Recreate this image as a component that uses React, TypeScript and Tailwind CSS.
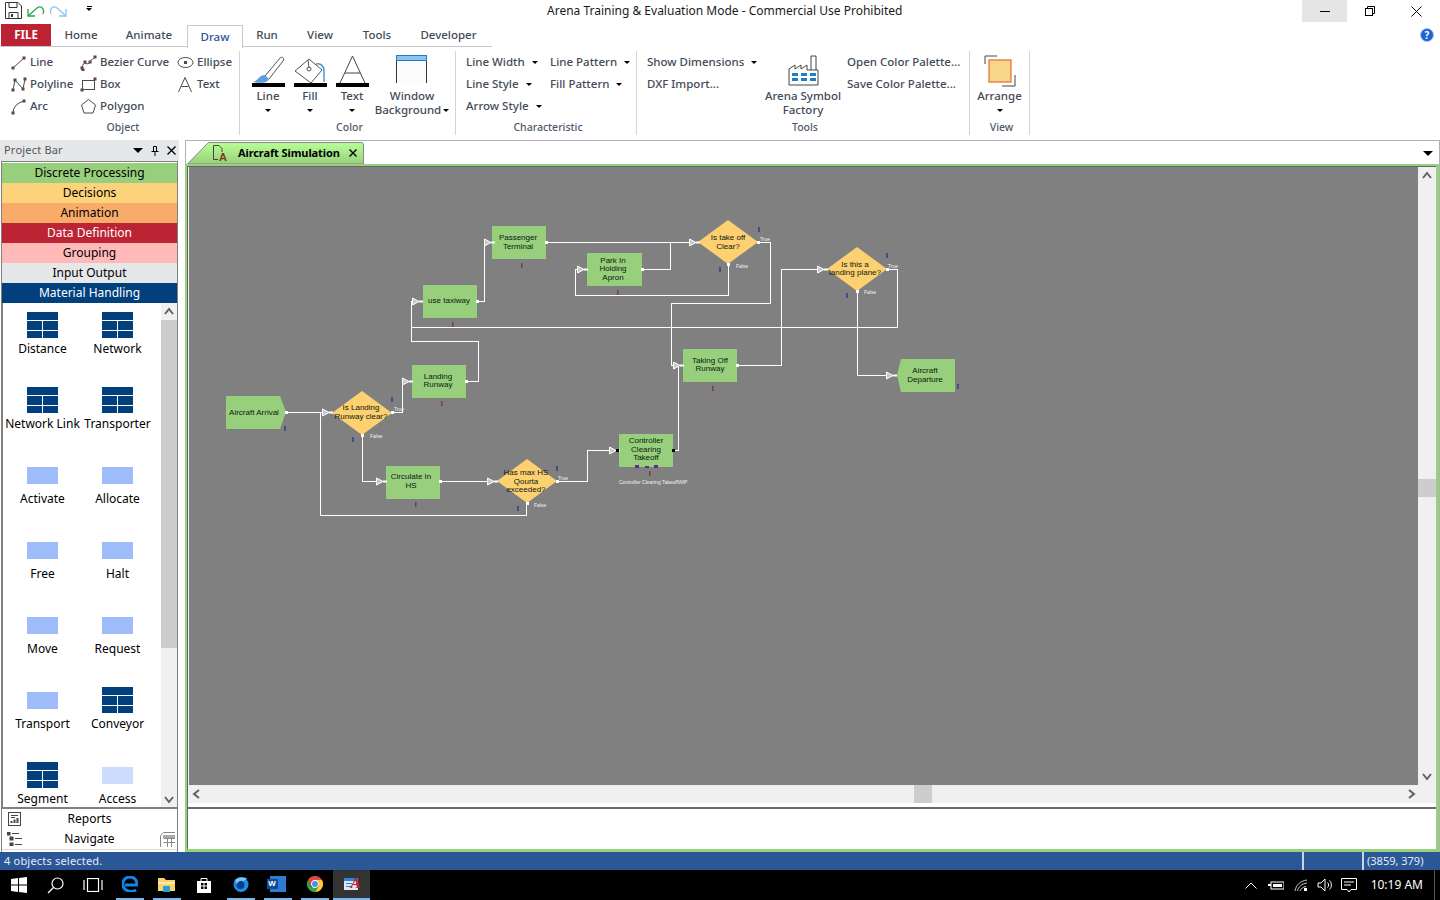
import React from 'react';

const UI_FONT = "font-['Noto_Sans',sans-serif]";

const Caret = ({ className = '' }: { className?: string }) => (
  <span className={`inline-block w-0 h-0 border-x-[3px] border-t-[3px] border-x-transparent border-t-black ${className}`} />
);

// small ribbon icons, red dots are the drawing handles
const Dot = ({ x, y }: { x: number; y: number }) => <rect x={x - 1} y={y - 1} width={2} height={2} fill="#e0242c" />;

const SmallIcon = ({ name }: { name: string }) => (
  <svg width={17} height={17} viewBox="0 0 17 17" fill="none" stroke="#4a4a4a" strokeWidth={1} className="shrink-0">
    {name === 'line' && (<><path d="M3 14 L14 4" /><Dot x={3} y={14} /><Dot x={14} y={4} /></>)}
    {name === 'polyline' && (<><path d="M3 14 L5 4 L13 13 L15 3" /><Dot x={3} y={14} /><Dot x={5} y={4} /><Dot x={13} y={13} /><Dot x={15} y={3} /></>)}
    {name === 'arc' && (<><path d="M3 15 Q3 6 14 3" /><Dot x={3} y={15} /><Dot x={14} y={3} /></>)}
    {name === 'bezier' && (<><path d="M2 14 C3 5 8 13 10 8 C11 5 13 6 15 3" /><Dot x={2} y={14} /><Dot x={5} y={8} /><Dot x={10} y={8} /><Dot x={15} y={3} /><Dot x={3} y={16} /></>)}
    {name === 'box' && (<><rect x={2.5} y={4.5} width={12} height={9} /><Dot x={15} y={3} /><Dot x={2} y={14} /></>)}
    {name === 'polygon' && <path d="M8.5 1.5 L15.5 7 L13 15 L4 15 L1.5 7 Z" />}
    {name === 'ellipse' && (<><ellipse cx={8.5} cy={8.5} rx={7.5} ry={5} /><Dot x={8.5} y={8.5} /></>)}
    {name === 'text' && (<><path d="M1.5 16 L8 1.5 L14.5 16" /><path d="M4.5 10.5 H11.5" /></>)}
  </svg>
);

const SmallBtn = ({ icon, label, className = '' }: { icon: string; label: string; className?: string }) => (
  <div className={`flex items-center gap-[3px] h-[22px] whitespace-nowrap ${className}`}>
    <SmallIcon name={icon} />
    <span>{label}</span>
  </div>
);

const MenuBtn = ({ label, gap = 'ml-[7px]', caret = true }: { label: string; gap?: string; caret?: boolean }) => (
  <div className="flex items-center h-[22px] whitespace-nowrap">
    <span>{label}</span>
    {caret && <Caret className={gap} />}
  </div>
);

const BigBtn = ({ width, icon, lines, caret, inlineCaret }: { width: string; icon: React.ReactNode; lines: string[]; caret?: boolean; inlineCaret?: boolean }) => (
  <div className={`flex flex-col items-center ${width}`}>
    <div className="h-[38px] pt-[4px]">{icon}</div>
    {lines.map((l, i) => (
      <div key={l} className="h-[14px] leading-[14px] whitespace-nowrap flex items-center">
        {l}
        {inlineCaret && i === lines.length - 1 && <Caret className="ml-[2px]" />}
      </div>
    ))}
    {caret && <div className="h-[14px] flex items-center"><Caret /></div>}
  </div>
);

const Group = ({ width, label, labelPad = 'pl-[4px]', children }: { width: string; label: string; labelPad?: string; children: React.ReactNode }) => (
  <div className={`flex flex-col h-[84px] mt-[4px] border-r border-[#d4d4d4] ${width}`}>
    <div className="h-[68px] flex">{children}</div>
    <div className={`h-[16px] leading-[16px] text-center text-[10.5px] text-[#4d5a6a] ${labelPad}`}>{label}</div>
  </div>
);

const BrushIcon = () => (
  <svg width={33} height={33} viewBox="0 0 33 33" fill="none">
    <path d="M13 21 L28 3 C30 1 33 3 31 6 L17 24" stroke="#555" />
    <path d="M1 27 C6 26 7 20 13 20 L17 24 C15 29 6 28 1 27 Z" fill="#5f9fdc" />
    <rect x={0} y={28} width={33} height={4} fill="#000" />
  </svg>
);

const FillIcon = () => (
  <svg width={33} height={33} viewBox="0 0 33 33" fill="none">
    <path d="M15 4 L28 15 L17 28 L1 16 Z" stroke="#555" />
    <path d="M14 5 L15 13" stroke="#555" />
    <circle cx={15} cy={14} r={2} stroke="#555" />
    <path d="M22 9 C28 8 30 12 30 16 V27" stroke="#4a9ad8" strokeWidth={1.5} />
    <rect x={0} y={28} width={33} height={4} fill="#000" />
  </svg>
);

const TextColorIcon = () => (
  <svg width={33} height={33} viewBox="0 0 33 33" fill="none" stroke="#444">
    <path d="M4 28 L16.5 1 L29 28" />
    <path d="M9 18 H24" />
    <rect x={0} y={28} width={33} height={4} fill="#000" stroke="none" />
  </svg>
);

const WindowIcon = () => (
  <svg width={32} height={29} viewBox="0 0 32 29" fill="none">
    <rect x={0.5} y={0.5} width={30} height={28} fill="#fbfbfb" stroke="none" />
    <path d="M0.5 28 V0.5 H30.5 V28" stroke="#333" />
    <rect x={0.5} y={0.5} width={30} height={5} fill="#8fc3ec" stroke="#1f7fc4" />
  </svg>
);

const FactoryIcon = () => (
  <svg width={32} height={31} viewBox="0 0 32 31">
    <g fill="none" stroke="#444">
      <path d="M2 30 V14 L8 10 V14 L14 10 V14 L20 10 V15" />
      <path d="M24 15 V1 H29 V15" />
      <path d="M2 30 H31 V15 H20" />
    </g>
    {[5, 14, 23].map(x => [18, 23].map(y => <rect key={`${x}-${y}`} x={x} y={y} width={6} height={3} fill="#1f7fc4" />))}
  </svg>
);

const ArrangeIcon = () => (
  <svg width={32} height={33} viewBox="0 0 32 33" fill="none">
    <path d="M1 9 V1 H13" stroke="#444" />
    <path d="M31 20 V31 H18" stroke="#444" />
    <rect x={5} y={5} width={22} height={22} fill="#f7d58a" stroke="#e0702a" strokeWidth={1.2} />
  </svg>
);

const Ribbon = () => (
  <div className="flex h-[93px] text-[11.5px] font-medium text-[#444a58] shrink-0">
    <Group width="w-[240px]" label="Object" labelPad="pl-[7px]">
      <div className="grid grid-cols-[70px_97px_60px] pl-[10px] auto-rows-[22px]">
        <SmallBtn icon="line" label="Line" />
        <SmallBtn icon="bezier" label="Bezier Curve" />
        <SmallBtn icon="ellipse" label="Ellipse" />
        <SmallBtn icon="polyline" label="Polyline" />
        <SmallBtn icon="box" label="Box" />
        <SmallBtn icon="text" label="Text" />
        <SmallBtn icon="arc" label="Arc" />
        <SmallBtn icon="polygon" label="Polygon" />
      </div>
    </Group>
    <Group width="w-[216px]" label="Color">
      <div className="flex pl-[7px]">
        <BigBtn width="w-[42px]" icon={<BrushIcon />} lines={['Line']} caret />
        <BigBtn width="w-[42px]" icon={<FillIcon />} lines={['Fill']} caret />
        <BigBtn width="w-[42px]" icon={<TextColorIcon />} lines={['Text']} caret />
        <BigBtn width="w-[78px]" icon={<WindowIcon />} lines={['Window', 'Background']} inlineCaret />
      </div>
    </Group>
    <Group width="w-[181px]" label="Characteristic">
      <div className="grid grid-cols-[84px_90px] pl-[10px] auto-rows-[22px]">
        <MenuBtn label="Line Width" />
        <MenuBtn label="Line Pattern" />
        <MenuBtn label="Line Style" />
        <MenuBtn label="Fill Pattern" />
        <MenuBtn label="Arrow Style" />
      </div>
    </Group>
    <Group width="w-[333px]" label="Tools">
      <div className="flex pl-[10px]">
        <div className="w-[116px]">
          <MenuBtn label="Show Dimensions" />
          <MenuBtn label="DXF Import..." caret={false} />
        </div>
        <BigBtn width="w-[80px]" icon={<FactoryIcon />} lines={['Arena Symbol', 'Factory']} />
        <div className="pl-[4px]">
          <MenuBtn label="Open Color Palette..." caret={false} />
          <MenuBtn label="Save Color Palette..." caret={false} />
        </div>
      </div>
    </Group>
    <Group width="w-[60px]" label="View">
      <BigBtn width="w-[60px]" icon={<ArrangeIcon />} lines={['Arrange']} caret />
    </Group>
  </div>
);

const TitleBar = () => (
  <div className="flex h-[24px] shrink-0">
    <div className="flex items-start w-[547px] pt-[2px] pl-[5px]">
      <svg width={17} height={17} viewBox="0 0 17 17" fill="none" stroke="#333">
        <path d="M0.5 0.5 H13 L16.5 4 V16.5 H0.5 Z" />
        <path d="M4 0.5 V5.5 H12 V0.5" />
        <path d="M4 16.5 V10.5 H13 V16.5" />
        <rect x={6} y={12} width={2} height={3} fill="#333" stroke="none" />
      </svg>
      <svg width={18} height={14} viewBox="0 0 18 14" fill="none" stroke="#27a74a" strokeWidth={1.3} className="ml-[5px] mt-[3px]">
        <path d="M1 4 V11 H8" />
        <path d="M1 11 L10 3 C14 0 18 4 16 9" />
      </svg>
      <svg width={18} height={14} viewBox="0 0 18 14" fill="none" stroke="#8cc6ec" strokeWidth={1.3} className="ml-[4px] mt-[3px]">
        <path d="M17 4 V11 H10" />
        <path d="M17 11 L8 3 C4 0 0 4 2 9" />
      </svg>
      <div className="ml-[19px] mt-[4px] flex flex-col items-center gap-[1px]">
        <span className="w-[5px] h-[1px] bg-black" />
        <Caret />
      </div>
    </div>
    <div className="text-[12px] leading-[22px] text-[#1a1a1a] whitespace-nowrap">Arena Training &amp; Evaluation Mode - Commercial Use Prohibited</div>
    <div className="flex-1 flex justify-end h-[22px]">
      <div className="w-[45px] bg-[#e5e5e5] flex items-center justify-center">
        <span className="w-[10px] h-px bg-black" />
      </div>
      <div className="w-[46px] flex items-center justify-center">
        <svg width={10} height={10} viewBox="0 0 10 10" fill="none" stroke="#000">
          <rect x={0.5} y={2.5} width={7} height={7} />
          <path d="M2.5 2.5 V0.5 H9.5 V7.5 H7.5" />
        </svg>
      </div>
      <div className="w-[47px] flex items-center justify-center">
        <svg width={11} height={11} viewBox="0 0 11 11" stroke="#000"><path d="M0.5 0.5 L10.5 10.5 M10.5 0.5 L0.5 10.5" /></svg>
      </div>
    </div>
  </div>
);

const TABS = [
  { label: 'Home', w: 'w-[60px]' },
  { label: 'Animate', w: 'w-[76px]' },
];
const TABS_AFTER = [
  { label: 'Run', w: 'w-[48px]' },
  { label: 'View', w: 'w-[58px]' },
  { label: 'Tools', w: 'w-[56px]' },
  { label: 'Developer', w: 'w-[87px]' },
];

const TabRow = () => (
  <div className="flex items-center h-[23px] shrink-0 pr-[9px]">
    <div className="flex h-[23px] w-[492px] border-b border-[#c8c8cc] text-[11.5px] font-medium text-[#444a58]">
      <div className="ml-px w-[50px] bg-[#bc2233] text-white font-bold text-[11.5px] flex items-center justify-center">FILE</div>
      {TABS.map(t => <div key={t.label} className={`${t.w} flex items-center justify-center`}>{t.label}</div>)}
      <div className="w-[56px] h-[23px] mt-px bg-white border border-b-0 border-[#c8c8cc] text-[#2f5597] flex items-center justify-center">Draw</div>
      {TABS_AFTER.map(t => <div key={t.label} className={`${t.w} flex items-center justify-center`}>{t.label}</div>)}
    </div>
    <div className="ml-auto -mt-[1px] mr-[-3px] w-[14px] h-[14px] rounded-full bg-[#1f62d6] border border-[#a9c4ee] text-white text-[10px] font-bold leading-[12px] text-center">?</div>
  </div>
);

const ACCORDION = [
  { label: 'Discrete Processing', cls: 'bg-[#98cf7c] text-black' },
  { label: 'Decisions', cls: 'bg-[#fcd27a] text-black' },
  { label: 'Animation', cls: 'bg-[#f9ab6a] text-black' },
  { label: 'Data Definition', cls: 'bg-[#bc2333] text-white' },
  { label: 'Grouping', cls: 'bg-[#ffb9b9] text-black' },
  { label: 'Input Output', cls: 'bg-[#e6e7e9] text-black' },
  { label: 'Material Handling', cls: 'bg-[#023f7d] text-white' },
];

const MODULES: { label: string; kind: 'table' | 'flat' | 'pale' }[] = [
  { label: 'Distance', kind: 'table' },
  { label: 'Network', kind: 'table' },
  { label: 'Network Link', kind: 'table' },
  { label: 'Transporter', kind: 'table' },
  { label: 'Activate', kind: 'flat' },
  { label: 'Allocate', kind: 'flat' },
  { label: 'Free', kind: 'flat' },
  { label: 'Halt', kind: 'flat' },
  { label: 'Move', kind: 'flat' },
  { label: 'Request', kind: 'flat' },
  { label: 'Transport', kind: 'flat' },
  { label: 'Conveyor', kind: 'table' },
  { label: 'Segment', kind: 'table' },
  { label: 'Access', kind: 'pale' },
];

const ModuleIcon = ({ kind }: { kind: 'table' | 'flat' | 'pale' }) => {
  if (kind === 'table') {
    return (
      <svg width={31} height={26} viewBox="0 0 31 26">
        <rect width={31} height={26} fill="#023f7d" />
        <path d="M0 8.5 H31 M0 18.5 H31 M15.5 8 V26" stroke="#fff" />
      </svg>
    );
  }
  return <div className={`w-[31px] h-[17px] ${kind === 'flat' ? 'bg-[#9dbcf9]' : 'bg-[#cbdcfc]'}`} />;
};

const Chevron = ({ dir }: { dir: 'up' | 'down' | 'left' | 'right' }) => {
  const d = { up: 'M1 7 L5 2 L9 7', down: 'M1 3 L5 8 L9 3', left: 'M7 1 L2 5 L7 9', right: 'M3 1 L8 5 L3 9' }[dir];
  return (
    <svg width={10} height={10} viewBox="0 0 10 10" fill="none" stroke="#606060" strokeWidth={2}><path d={d} /></svg>
  );
};

const Sidebar = () => (
  <div className="w-[179px] shrink-0 flex flex-col text-[12px] text-black">
    <div className="h-[21px] bg-[#e6e7e9] flex items-center pl-[4px] pr-[3px] text-[11px] text-[#555]">
      <span className="flex-1 tracking-[0.2px]">Project Bar</span>
      <span className="w-0 h-0 border-x-[5px] border-t-[5px] border-x-transparent border-t-black mr-[8px]" />
      <svg width={8} height={10} viewBox="0 0 8 10" fill="none" stroke="#000" className="mr-[8px]">
        <path d="M2.5 0.5 H5.5 V5.5 H2.5 Z M0.5 5.5 H7.5 M4 5.5 V10" />
      </svg>
      <svg width={9} height={9} viewBox="0 0 9 9" stroke="#000" strokeWidth={1.3}><path d="M0.5 0.5 L8.5 8.5 M8.5 0.5 L0.5 8.5" /></svg>
    </div>
    <div className="flex-1 ml-px mr-[1px] border-x border-t border-[#808080] flex flex-col mt-0 pt-px min-h-0">
      {ACCORDION.map(a => (
        <div key={a.label} className={`h-[20px] leading-[20px] text-center shrink-0 ${a.cls}`}>{a.label}</div>
      ))}
      <div className="h-[506px] shrink-0 flex border-b-2 border-l border-[#808080] bg-white overflow-hidden">
        <div className="w-[158px] shrink-0 h-full overflow-hidden">
          <div className="grid grid-cols-[75px_75px] pl-[2px] auto-rows-[75px]">
            {MODULES.map(m => (
              <div key={m.label} className="flex flex-col items-center whitespace-nowrap">
                <div className="h-[38px] mt-0 pt-[6px] flex items-center justify-center"><div className="h-[26px] flex items-center"><ModuleIcon kind={m.kind} /></div></div>
                <div className="h-[16px] leading-[16px] mt-0">{m.label}</div>
              </div>
            ))}
          </div>
        </div>
        <div className="w-[17px] h-full bg-[#f0f0f0] flex flex-col">
          <div className="h-[17px] flex items-center justify-center"><Chevron dir="up" /></div>
          <div className="h-[328px] bg-[#cdcdcd]" />
          <div className="flex-1" />
          <div className="h-[17px] flex items-center justify-center"><Chevron dir="down" /></div>
        </div>
      </div>
      <div className="h-[20px] leading-[20px] relative text-center bg-white">
        Reports
        <svg width={13} height={14} viewBox="0 0 13 14" fill="none" stroke="#444" className="absolute left-[6px] top-[3px]">
          <rect x={0.5} y={0.5} width={12} height={13} />
          <path d="M3 3.5 H10 M3 5.5 H7" />
          <path d="M3.5 11 V9 M6.5 11 V7.5 M9.5 11 V6" strokeWidth={2} />
        </svg>
      </div>
      <div className="h-[20px] leading-[20px] relative text-center bg-white">
        Navigate
        <svg width={15} height={14} viewBox="0 0 15 14" stroke="#444" className="absolute left-[5px] top-[3px]">
          <path d="M5 1.5 H12 M8 6.5 H15 M8 12.5 H15" />
          <rect x={0} y={0} width={3} height={3} fill="#444" />
          <rect x={3} y={5} width={3} height={3} fill="#444" />
          <rect x={3} y={11} width={3} height={3} fill="#444" />
        </svg>
        <svg width={15} height={15} viewBox="0 0 15 15" fill="none" stroke="#888" className="absolute right-[2px] top-[3px]">
          <path d="M0.5 15 V3.5 L3.5 0.5 H15" />
          <path d="M3.5 6.5 H15 M3.5 10.5 H15 M7.5 4 V15 M11.5 4 V15" />
          <rect x={3} y={3} width={12} height={3} fill="#aaa" stroke="none" />
        </svg>
      </div>
      <div className="flex-1 border-t border-[#d8d8d8]" />
    </div>
  </div>
);

type Node = { x: number; y: number; cx: number; lines: [string, number][] };

const RECTS: Node[] = [
  { x: 492, y: 225, cx: 518, lines: [['Passenger', 239], ['Terminal', 248]] },
  { x: 423, y: 284, cx: 449, lines: [['use taxiway', 302]] },
  { x: 412, y: 364, cx: 438, lines: [['Landing', 378], ['Runway', 386]] },
  { x: 386, y: 465, cx: 411, lines: [['Circulate In', 478], ['HS', 487]] },
  { x: 619, y: 433, cx: 646, lines: [['Controller', 442], ['Clearing', 451], ['Takeoff', 459]] },
  { x: 683, y: 348, cx: 710, lines: [['Taking Off', 362], ['Runway', 370]] },
];

const DIAMONDS: { cx: number; cy: number; tx: number; lines: [string, number][] }[] = [
  { cx: 362, cy: 412, tx: 361, lines: [['Is Landing', 409], ['Runway clear?', 418]] },
  { cx: 527, cy: 480, tx: 526, lines: [['Has max HS', 474], ['Qourta', 483], ['exceeded?', 491]] },
  { cx: 728, cy: 241, tx: 728, lines: [['Is take off', 239], ['Clear?', 248]] },
  { cx: 857, cy: 268, tx: 855, lines: [['Is this a', 266], ['landing plane?', 274]] },
];

const WIRES = [
  '286,411 322,411',
  '320,411 320,514 526,514 526,503',
  '362,434 362,480 376,480',
  '392,411 402,411 402,380 402,380',
  '402,411 402,380 403,380',
  '466,380 478,380 478,340 411,340 411,300 412,300',
  '477,300 484,300 484,241 485,241',
  '411,326 897,326 897,268 887,268',
  '440,480 487,480',
  '546,241 689,241',
  '642,268 670,268 670,241',
  '728,263 728,294 575,294 575,268 577,268',
  '758,241 770,241 770,302 671,302 671,364 673,364',
  '557,480 587,480 587,449 609,449',
  '673,449 678,449 678,364',
  '737,364 781,364 781,268 817,268',
  '857,290 857,374 886,374',
];

// entry point: x is the left end of the little flag
const ENTRIES: [number, number][] = [
  [322, 411], [402, 380], [376, 480], [412, 300], [484, 241], [487, 480], [689, 241],
  [577, 268], [673, 364], [609, 449], [817, 268], [886, 374],
];

const EXITS: [number, number][] = [[286, 411], [466, 380], [477, 300], [546, 241], [642, 268], [440, 480], [737, 364], [392, 411], [362, 434], [557, 480], [527, 502], [758, 241], [728, 263], [887, 268], [857, 290]];

const BLUE_MARKS: [number, number][] = [[284, 425], [391, 396], [352, 436], [517, 505], [556, 465], [719, 266], [758, 226], [846, 292], [886, 252], [957, 383]];
const RED_MARKS: [number, number][] = [[441, 400], [415, 501], [521, 262], [617, 289], [712, 385], [649, 470], [452, 321]];

const SMALL_LABELS: [string, number, number][] = [
  ['True', 394, 410], ['False', 370, 437], ['True', 558, 479], ['False', 534, 506],
  ['True', 760, 240], ['False', 736, 267], ['True', 888, 267], ['False', 864, 293],
];

const Diagram = () => (
  <svg width={1229} height={618} viewBox="189 166 1229 618" className="block">
    <g fontFamily="'Liberation Sans', sans-serif" fontSize={8} fill="#0b1a10" textAnchor="middle">
      <polygon points="226,395 280,395 286,411 280,428 226,428" fill="#98cf7c" />
      <text x={254} y={414}>Aircraft Arrival</text>
      <polygon points="897,374 901,358 955,358 955,391 901,391" fill="#98cf7c" />
      <text x={925} y={372}>Aircraft</text>
      <text x={925} y={381}>Departure</text>
      {RECTS.map(r => (
        <g key={r.x}>
          <rect x={r.x} y={r.y} width={54} height={33} fill="#98cf7c" />
          {r.lines.map(([t, y]) => <text key={t} x={r.cx} y={y}>{t}</text>)}
        </g>
      ))}
      <rect x={587} y={252} width={55} height={33} fill="#98cf7c" />
      <text x={613} y={262}>Park In</text>
      <text x={613} y={270}>Holding</text>
      <text x={613} y={279}>Apron</text>
      {DIAMONDS.map(d => (
        <g key={d.cx}>
          <polygon points={`${d.cx - 30},${d.cy} ${d.cx},${d.cy - 22} ${d.cx + 30},${d.cy} ${d.cx},${d.cy + 22}`} fill="#fdd071" />
          {d.lines.map(([t, y]) => <text key={t} x={d.tx} y={y}>{t}</text>)}
        </g>
      ))}
    </g>
    <g transform="translate(0.5 0.5)" fill="none" stroke="#fff" strokeWidth={1} shapeRendering="crispEdges">
      {WIRES.map(w => <polyline key={w} points={w} />)}
    </g>
    {ENTRIES.map(([x, y]) => (
      <g key={`${x}-${y}`}>
        <polygon points={`${x + 0.5},${y - 3} ${x + 7},${y + 0.5} ${x + 0.5},${y + 4}`} fill="#c8c8c8" stroke="#fff" />
        <rect x={x + 7} y={y - 0.5} width={4} height={2} fill="#fff" />
      </g>
    ))}
    {EXITS.map(([x, y]) => <rect key={`${x}-${y}`} x={x - 1} y={y - 1} width={3} height={3} fill="#fff" />)}
    {BLUE_MARKS.map(([x, y]) => <rect key={`${x}-${y}`} x={x} y={y} width={2} height={5} fill="#4a4a8a" />)}
    {RED_MARKS.map(([x, y]) => <rect key={`${x}-${y}`} x={x} y={y} width={1.5} height={5} fill="#7a3a4a" />)}
    <rect x={672} y={448} width={3} height={3} fill="#000" />
    <rect x={616} y={448} width={3} height={3} fill="#000" />
    <rect x={635} y={464} width={4} height={3} fill="#5c2d91" />
    <rect x={645} y={465} width={4} height={2} fill="#5c2d91" />
    <rect x={654} y={464} width={4} height={3} fill="#5c2d91" />
    <g fontFamily="'Liberation Sans', sans-serif" fontSize={5} fill="#f2f2f2">
      {SMALL_LABELS.map(([t, x, y]) => <text key={`${t}${x}`} x={x} y={y}>{t}</text>)}
      <text x={619} y={483}>Controller Clearing TakeoffWIP</text>
    </g>
  </svg>
);

const DocArea = () => (
  <div className="flex-1 flex flex-col border-t border-x border-[#b0b0ba] min-w-0">
    <div className="h-[23px] shrink-0 flex items-end pl-[1px] pr-[6px]">
      <div className="relative w-[177px] h-[22px] flex items-center text-[11px] font-bold text-black">
        <svg width={177} height={22} viewBox="0 0 177 22" className="absolute inset-0">
          <defs>
            <linearGradient id="tabFill" x1="0" y1="0" x2="0" y2="1">
              <stop offset="0" stopColor="#b8ff96" />
              <stop offset="1" stopColor="#98cf7c" />
            </linearGradient>
          </defs>
          <path d="M0.5 22 L21 1 Q21.5 0.5 23 0.5 H174 Q176.5 0.5 176.5 3 V22 Z" fill="url(#tabFill)" stroke="#8a8a8a" />
        </svg>
        <svg width={17} height={17} viewBox="0 0 17 17" fill="none" stroke="#444" className="relative ml-[25px]">
          <path d="M1.5 14.5 V0.5 H7 L10 3.5 V7" />
          <path d="M1.5 14.5 H6" />
          <text x={7} y={16} fontSize={11} fill="#7b3a1e" stroke="none" fontFamily="'Liberation Sans', sans-serif">A</text>
        </svg>
        <span className="relative ml-[9px] tracking-[-0.1px]">Aircraft Simulation</span>
        <svg width={8} height={8} viewBox="0 0 8 8" stroke="#000" strokeWidth={1.4} className="relative ml-auto mr-[7px]"><path d="M0.5 0.5 L7.5 7.5 M7.5 0.5 L0.5 7.5" /></svg>
      </div>
      <div className="ml-auto mb-[8px] w-0 h-0 border-x-[5px] border-t-[5px] border-x-transparent border-t-black" />
    </div>
    <div className="flex-1 min-h-0 bg-[#98d07c] pt-[2px] pb-[3px] pr-[3px] pl-[2px] -ml-px">
      <div className="h-full flex flex-col bg-[#f0f0f0] border-l border-t border-[#666]">
        <div className="h-[618px] shrink-0 flex pl-px">
          <div className="w-[1229px] shrink-0 bg-[#808080]"><Diagram /></div>
          <div className="flex-1 flex flex-col bg-[#f0f0f0]">
            <div className="h-[18px] flex items-center justify-center"><Chevron dir="up" /></div>
            <div className="h-[294px]" />
            <div className="h-[18px] bg-[#cdcdcd]" />
            <div className="flex-1" />
            <div className="h-[18px] flex items-center justify-center"><Chevron dir="down" /></div>
          </div>
        </div>
        <div className="h-[18px] shrink-0 flex items-center pl-[4px] pr-[20px]">
          <Chevron dir="left" />
          <div className="w-[712px]" />
          <div className="w-[18px] h-[18px] bg-[#cdcdcd]" />
          <div className="flex-1" />
          <Chevron dir="right" />
        </div>
        <div className="h-[4px] shrink-0 bg-white" />
        <div className="flex-1 bg-white border-t-2 border-[#6a6a6a]" />
      </div>
    </div>
  </div>
);

const StatusBar = () => (
  <div className="h-[18px] shrink-0 bg-[#2b5797] flex items-center text-[11px] text-[#e4ecf7]">
    <span className="w-[1302px] pl-[4px] tracking-[0.2px]">4 objects selected.</span>
    <span className="w-[60px] h-[18px] border-l-2 border-[#c8d4e6]" />
    <span className="h-[18px] border-l-2 border-[#c8d4e6] pl-[3px] leading-[18px]">(3859, 379)</span>
  </div>
);

const TaskItem = ({ children, bar = true, active = false }: { children: React.ReactNode; bar?: boolean; active?: boolean }) => (
  <div className={`w-[37px] h-[30px] flex justify-center ${active ? 'bg-[#333]' : ''}`}>
    <div className={`h-[30px] flex items-center justify-center ${active ? 'w-[37px]' : 'w-[28px]'} ${bar ? 'border-b-2 border-[#76b9ed]' : ''}`}>
      {children}
    </div>
  </div>
);

const Taskbar = () => (
  <div className="h-[30px] shrink-0 bg-black flex items-center text-white">
    <TaskItem bar={false}>
      <svg width={16} height={16} viewBox="0 0 16 16" fill="#fff">
        <path d="M0 2 L7 1 V7.5 H0 Z M8 1 L16 0 V7.5 H8 Z M0 8.5 H7 V15 L0 14 Z M8 8.5 H16 V16 L8 15 Z" />
      </svg>
    </TaskItem>
    <TaskItem bar={false}>
      <svg width={17} height={17} viewBox="0 0 17 17" fill="none" stroke="#fff" strokeWidth={1.2}>
        <circle cx={10.5} cy={6.5} r={5.5} />
        <path d="M6.5 10.5 L1 16" />
      </svg>
    </TaskItem>
    <TaskItem bar={false}>
      <svg width={20} height={14} viewBox="0 0 20 14" fill="none" stroke="#fff" strokeWidth={1.2}>
        <rect x={4.5} y={0.5} width={11} height={13} />
        <path d="M1 2 V12 M19 2 V12" />
      </svg>
    </TaskItem>
    <TaskItem>
      <svg width={16} height={16} viewBox="0 0 16 16" fill="none">
        <path d="M3 9 H15 C15 4 12 1 8 1 C3 1 0 5 1 10 C2 15 9 17 14 14" stroke="#1483e6" strokeWidth={3} />
      </svg>
    </TaskItem>
    <TaskItem>
      <svg width={17} height={15} viewBox="0 0 17 15">
        <path d="M0 1 H6 L8 3 H17 V14 H0 Z" fill="#f7d568" />
        <rect x={0} y={5} width={17} height={2} fill="#fbe9a9" />
        <rect x={5} y={9} width={7} height={6} fill="#2c9be0" />
      </svg>
    </TaskItem>
    <TaskItem bar={false}>
      <svg width={14} height={16} viewBox="0 0 14 16" fill="#fff">
        <path d="M0 4 H14 V16 H0 Z" />
        <path d="M4 4 V1.5 H10 V4" fill="none" stroke="#fff" />
        <rect x={4} y={6} width={2.5} height={2.5} fill="#000" />
        <rect x={7.5} y={6} width={2.5} height={2.5} fill="#000" />
        <rect x={4} y={9.5} width={2.5} height={2.5} fill="#000" />
        <rect x={7.5} y={9.5} width={2.5} height={2.5} fill="#000" />
      </svg>
    </TaskItem>
    <TaskItem>
      <svg width={16} height={16} viewBox="0 0 16 16">
        <circle cx={8} cy={8.5} r={7.5} fill="#1f8fe6" />
        <circle cx={7.5} cy={9} r={4} fill="#0a3d91" />
        <path d="M2 4 C5 1 11 1 14 2 L11 5 C8 4 5 5 4 8 Z" fill="#7cc7f5" />
      </svg>
    </TaskItem>
    <TaskItem>
      <div className="relative w-[16px] h-[16px] bg-[#2b7cd3]">
        <div className="absolute left-[-3px] top-[3px] w-[11px] h-[10px] bg-[#124a96] text-white text-[8px] font-bold leading-[10px] text-center font-['Liberation_Sans',sans-serif]">W</div>
      </div>
    </TaskItem>
    <TaskItem>
      <svg width={16} height={16} viewBox="0 0 16 16">
        <path d="M8 0 A8 8 0 0 1 15 4 L8 4 L4 11 L1 4 A8 8 0 0 1 8 0 Z" fill="#dd4b3e" />
        <path d="M15 4 A8 8 0 0 1 8 16 L12 9 L8 4 Z" fill="#fcc934" />
        <path d="M1 4 A8 8 0 0 0 8 16 L12 9 L4 11 Z" fill="#2fa84f" />
        <circle cx={8} cy={8} r={3.6} fill="#4a90e2" stroke="#fff" />
      </svg>
    </TaskItem>
    <TaskItem active>
      <div className="relative w-[16px] h-[14px]">
        <svg width={14} height={12} viewBox="0 0 14 12" className="mt-[1px]">
          <rect width={14} height={12} fill="#dfe9f5" />
          <rect width={14} height={3} fill="#2f86d8" />
          <rect x={2} y={5} width={6} height={1} fill="#2f86d8" />
          <rect x={2} y={8} width={6} height={1} fill="#2f86d8" />
        </svg>
        <span className="absolute left-[7px] top-[-3px] text-[15px] leading-[18px] font-bold italic text-[#c8202e] font-['Liberation_Serif',serif]">A</span>
      </div>
    </TaskItem>
    <div className="flex-1 flex items-center justify-end pr-[5px]">
      <svg width={12} height={7} viewBox="0 0 12 7" fill="none" stroke="#fff" className="mr-[11px]"><path d="M0.5 6.5 L6 1 L11.5 6.5" /></svg>
      <svg width={16} height={10} viewBox="0 0 16 10" fill="#fff" className="mr-[10px]">
        <rect x={3} y={2} width={13} height={7} fill="none" stroke="#fff" />
        <rect x={5} y={4} width={9} height={3} />
        <rect x={0} y={4} width={3} height={2} />
      </svg>
      <svg width={14} height={13} viewBox="0 0 14 13" fill="none" stroke="#c8c8c8" className="mr-[9px]">
        <path d="M1 12 C2 6 6 2 13 1 M3.5 12 C4 8 8 4.5 13 4 M6 12 C7 9.5 9 8 12 7.5" />
        <rect x={10} y={9} width={3} height={3} fill="#fff" stroke="none" />
      </svg>
      <svg width={16} height={14} viewBox="0 0 16 14" fill="none" stroke="#fff" className="mr-[8px]">
        <path d="M1 5 H4 L8 1 V13 L4 9 H1 Z" />
        <path d="M10.5 4.5 C12 6 12 8 10.5 9.5 M12.5 2.5 C15 5 15 9 12.5 11.5" />
      </svg>
      <svg width={16} height={16} viewBox="0 0 16 16" fill="none" stroke="#fff" className="mr-[14px]">
        <path d="M0.5 1.5 H15.5 V12.5 H10 L8 15 L6 12.5 H0.5 Z" />
        <path d="M3 5 H13 M3 8 H10" />
      </svg>
      <span className="text-[12px] text-white whitespace-nowrap mr-[11px]">10:19 AM</span>
      <span className="w-px h-[30px] bg-[#555]" />
    </div>
  </div>
);

export default function App() {
  return (
    <div className={`w-[1440px] h-[900px] bg-white flex flex-col overflow-hidden ${UI_FONT}`}>
      <TitleBar />
      <TabRow />
      <Ribbon />
      <div className="flex-1 min-h-0 flex gap-[6px]">
        <Sidebar />
        <DocArea />
      </div>
      <StatusBar />
      <Taskbar />
    </div>
  );
}
